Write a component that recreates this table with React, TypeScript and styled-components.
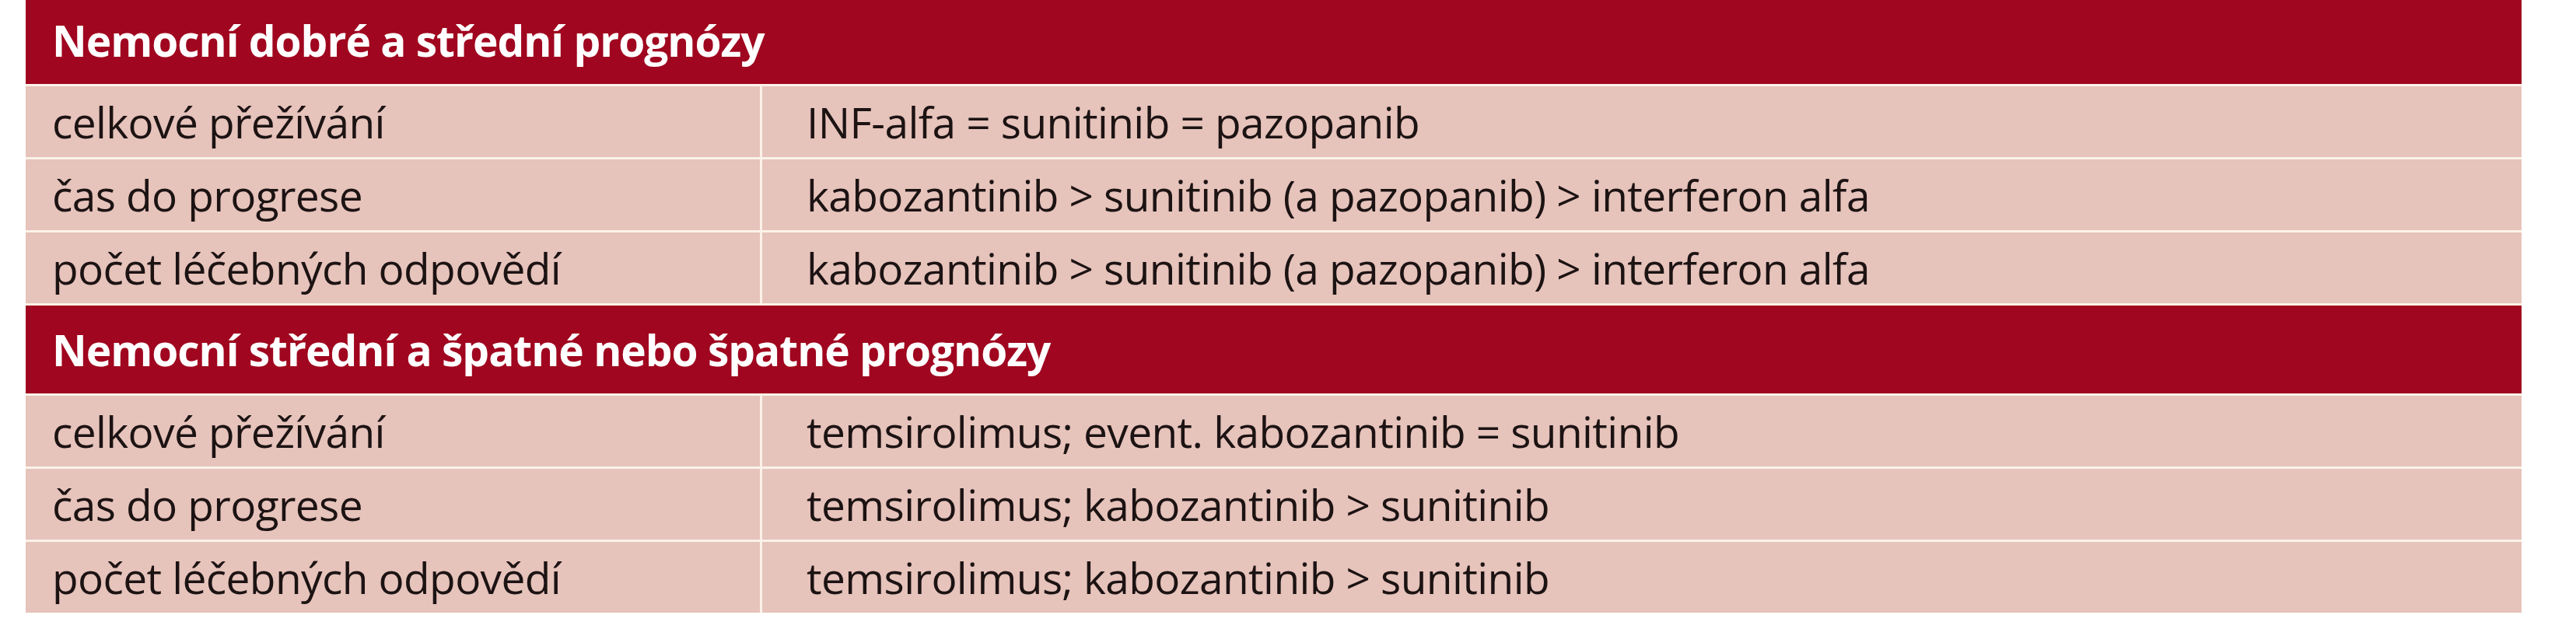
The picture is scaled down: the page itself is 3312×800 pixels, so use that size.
import React from 'react';
import styled, { createGlobalStyle } from 'styled-components';

interface Row {
  label: string;
  value: string;
}

interface Section {
  title: string;
  rows: Row[];
}

const sections: Section[] = [
  {
    title: 'Nemocní dobré a střední prognózy',
    rows: [
      { label: 'celkové přežívání', value: 'INF-alfa = sunitinib = pazopanib' },
      {
        label: 'čas do progrese',
        value: 'kabozantinib > sunitinib (a pazopanib) > interferon alfa',
      },
      {
        label: 'počet léčebných odpovědí',
        value: 'kabozantinib > sunitinib (a pazopanib) > interferon alfa',
      },
    ],
  },
  {
    title: 'Nemocní střední a špatné nebo špatné prognózy',
    rows: [
      {
        label: 'celkové přežívání',
        value: 'temsirolimus; event. kabozantinib = sunitinib',
      },
      { label: 'čas do progrese', value: 'temsirolimus; kabozantinib > sunitinib' },
      {
        label: 'počet léčebných odpovědí',
        value: 'temsirolimus; kabozantinib > sunitinib',
      },
    ],
  },
];

const GlobalStyle = createGlobalStyle`
  html, body {
    margin: 0;
    padding: 0;
    background: #ffffff;
  }
  body {
    font-family: 'Open Sans', 'Noto Sans', sans-serif;
    overflow: hidden;
  }
`;

const App: React.FC = () => {
  return (
    <>
      <GlobalStyle />
      <ScPage>
        <ScTable>
          {sections.map(section => (
            <React.Fragment key={section.title}>
              <ScHeader>{section.title}</ScHeader>
              {section.rows.map(row => (
                <React.Fragment key={section.title + row.label}>
                  <ScLabel>{row.label}</ScLabel>
                  <ScValue>{row.value}</ScValue>
                </React.Fragment>
              ))}
            </React.Fragment>
          ))}
        </ScTable>
      </ScPage>
    </>
  );
};

export default App;

const ScPage = styled.div`
  width: 3312px;
  height: 800px;
  padding-left: 33px;
  box-sizing: border-box;
  overflow: hidden;
`;

// the top of the first header is cut off in the source, hence the -5px
const ScTable = styled.div`
  width: 3209px;
  margin-top: -5px;
  display: grid;
  grid-template-columns: 944px 1fr;
  gap: 3px;
  background-color: #fbf2e8;
`;

const ScHeader = styled.div`
  grid-column: 1 / -1;
  height: 113px;
  box-sizing: border-box;
  display: flex;
  align-items: center;
  padding-left: 34px;
  background-color: #a0061f;
  color: #ffffff;
  font-size: 55px;
  font-weight: 700;
  letter-spacing: -1px;
  white-space: nowrap;
`;

const ScCell = styled.div`
  height: 91px;
  box-sizing: border-box;
  display: flex;
  align-items: center;
  background-color: #e6c3bb;
  color: #1c1313;
  font-size: 55px;
  letter-spacing: -0.6px;
  white-space: nowrap;
`;

const ScLabel = styled(ScCell)`
  padding-left: 34px;
`;

const ScValue = styled(ScCell)`
  padding-left: 57px;
`;
